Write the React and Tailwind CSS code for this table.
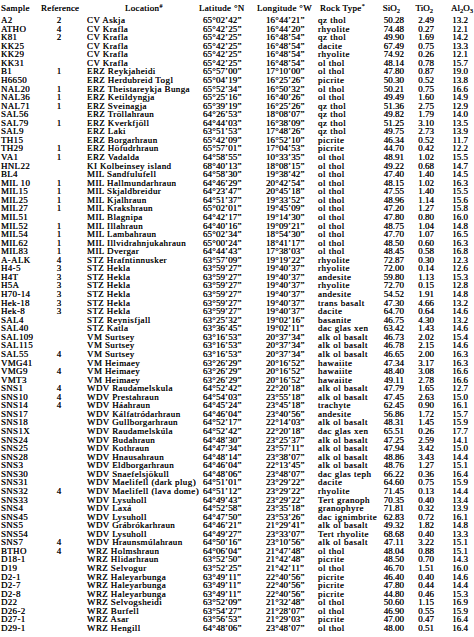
import React from "react";

const D = "\u00b0";
const q = (s) => s.replace(/'/g, "\u2019").replace(/"/g, "\u201d");

const rows = [
  ["A2", "2", "CV Askja", `65${D}02'42"`, `16${D}44'21"`, "qz thol", "50.28", "2.49", "13.2"],
  ["ATHO", "4", "CV Krafla", `65${D}42'25"`, `16${D}44'20"`, "rhyolite", "74.48", "0.27", "12.1"],
  ["K81", "2", "CV Krafla", `65${D}42'25"`, `16${D}48'54"`, "qz thol", "49.90", "1.69", "14.2"],
  ["KK25", "", "CV Krafla", `65${D}42'25"`, `16${D}48'54"`, "dacite", "67.49", "0.75", "13.3"],
  ["KK29", "", "CV Krafla", `65${D}42'25"`, `16${D}48'54"`, "rhyolite", "74.92", "0.26", "12.1"],
  ["KK31", "", "CV Krafla", `65${D}42'25"`, `16${D}48'54"`, "ol thol", "48.14", "0.78", "15.7"],
  ["B1", "1", "ERZ Reykjaheidi", `65${D}57'00"`, `17${D}10'00"`, "ol thol", "47.80", "0.87", "19.0"],
  ["H6650", "", "ERZ Herdubreid Togl", `65${D}04'19"`, `16${D}25'26"`, "picrite", "50.30", "0.52", "13.8"],
  ["NAL20", "1", "ERZ Theistareykja Bunga", `65${D}52'34"`, `16${D}50'32"`, "ol thol", "50.21", "0.75", "16.6"],
  ["NAL36", "1", "ERZ Ketildyngja", `65${D}25'16"`, `16${D}40'26"`, "ol thol", "49.49", "1.60", "14.9"],
  ["NAL71", "1", "ERZ Sveinagja", `65${D}39'19"`, `16${D}25'26"`, "qz thol", "51.36", "2.75", "12.9"],
  ["SAL56", "", "ERZ Tröllahraun", `64${D}26'53"`, `18${D}08'07"`, "qz thol", "49.82", "1.79", "14.0"],
  ["SAL79", "1", "ERZ Kverkfjöll", `64${D}44'03"`, `16${D}38'09"`, "qz thol", "51.25", "3.10", "13.5"],
  ["SAL9", "", "ERZ Laki", `63${D}51'53"`, `17${D}48'26"`, "qz thol", "49.75", "2.73", "13.9"],
  ["TH15", "", "ERZ Borgarhraun", `65${D}42'09"`, `16${D}52'10"`, "picrite", "46.34", "0.52", "11.7"],
  ["TH29", "1", "ERZ Höfudrhraun", `65${D}57'01"`, `17${D}04'53"`, "picrite", "44.70", "0.42", "12.2"],
  ["VA1", "1", "ERZ Vadalda", `64${D}58'55"`, `10${D}33'35"`, "ol thol", "48.91", "1.02", "15.5"],
  ["HNL22", "", "KI Kolbeinsey island", `68${D}40'13"`, `18${D}08'15"`, "ol thol", "49.22", "0.68", "14.7"],
  ["BL4", "", "MIL Sandfulufell", `64${D}58'30"`, `19${D}38'42"`, "ol thol", "47.40", "1.40", "14.5"],
  ["MIL 10", "1", "MIL Hallmundarhraun", `64${D}46'29"`, `20${D}42'54"`, "ol thol", "48.15", "1.02", "16.3"],
  ["MIL15", "1", "MIL Skjaldbreidur", `64${D}23'47"`, `20${D}45'18"`, "ol thol", "47.55", "1.40", "15.5"],
  ["MIL25", "1", "MIL Kjalhraun", `64${D}51'37"`, `19${D}33'52"`, "ol thol", "48.96", "1.14", "15.6"],
  ["MIL27", "1", "MIL Krakshraun", `65${D}02'01"`, `19${D}45'09"`, "ol thol", "47.20", "1.27", "15.8"],
  ["MIL51", "", "MIL Blagnipa", `64${D}42'17"`, `19${D}14'30"`, "ol thol", "47.80", "0.80", "16.0"],
  ["MIL52", "1", "MIL Illahraun", `64${D}40'16"`, `19${D}09'21"`, "ol thol", "48.75", "1.04", "14.8"],
  ["MIL54", "1", "MIL Lambahraun", `65${D}02'34"`, `18${D}54'30"`, "ol thol", "47.70", "1.07", "16.5"],
  ["MIL62", "1", "MIL Illvidrahnjukahraun", `65${D}00'24"`, `18${D}41'17"`, "ol thol", "48.50", "0.60", "16.3"],
  ["MIL83", "1", "MIL Dvergar", `64${D}44'43"`, `17${D}38'03"`, "ol thol", "48.45", "0.58", "16.8"],
  ["A-ALK", "4", "STZ Hrafntinnusker", `63${D}57'09"`, `19${D}19'22"`, "rhyolite", "72.87", "0.30", "12.3"],
  ["H4-5", "3", "STZ Hekla", `63${D}59'27"`, `19${D}40'37"`, "rhyolite", "72.00", "0.14", "12.6"],
  ["H4T", "3", "STZ Hekla", `63${D}59'27"`, `19${D}40'37"`, "andesite", "59.80", "1.13", "15.3"],
  ["H5A", "3", "STZ Hekla", `63${D}59'27"`, `19${D}40'37"`, "rhyolite", "72.70", "0.15", "12.8"],
  ["H70-14", "3", "STZ Hekla", `63${D}59'27"`, `19${D}40'37"`, "andesite", "54.52", "1.91", "14.8"],
  ["Hek-18", "3", "STZ Hekla", `63${D}59'27"`, `19${D}40'37"`, "trans basalt", "47.30", "4.66", "13.2"],
  ["Hek-8", "3", "STZ Hekla", `63${D}59'27"`, `19${D}40'37"`, "dacite", "64.70", "0.64", "14.6"],
  ["SAL4", "", "STZ Reynisfjall", `63${D}25'32"`, `19${D}02'16"`, "basanite", "46.75", "4.30", "13.2"],
  ["SAL40", "", "STZ Katla", `63${D}36'45"`, `19${D}02'11"`, "dac glas xen", "63.42", "1.43", "14.6"],
  ["SAL109", "", "VM Surtsey", `63${D}16'53"`, `20${D}37'34"`, "alk ol basalt", "46.73", "2.02", "15.4"],
  ["SAL115", "", "VM Surtsey", `63${D}16'53"`, `20${D}37'34"`, "alk ol basalt", "46.78", "2.15", "14.6"],
  ["SAL55", "4", "VM Surtsey", `63${D}16'53"`, `20${D}37'34"`, "alk ol basalt", "46.65", "2.00", "16.3"],
  ["VMG41", "", "VM Heimaey", `63${D}26'29"`, `20${D}16'52"`, "hawaiite", "47.34", "3.17", "16.3"],
  ["VMG9", "4", "VM Heimaey", `63${D}26'29"`, `20${D}16'52"`, "hawaiite", "48.40", "3.08", "16.6"],
  ["VMT3", "", "VM Heimaey", `63${D}26'29"`, `20${D}16'52"`, "hawaiite", "49.11", "2.78", "16.6"],
  ["SNS1", "4", "WDV Raudamelskula", `64${D}52'42"`, `22${D}20'18"`, "alk ol basalt", "47.79", "1.65", "12.7"],
  ["SNS10", "4", "WDV Prestahraun", `64${D}54'03"`, `23${D}55'18"`, "alk ol basalt", "47.45", "2.63", "15.0"],
  ["SNS14", "4", "WDV Háahraun", `64${D}45'24"`, `23${D}45'18"`, "trachyte", "62.45", "0.90", "16.1"],
  ["SNS17", "", "WDV Kálfatródarhraun", `64${D}46'04"`, `23${D}40'56"`, "andesite", "56.86", "1.72", "15.7"],
  ["SNS18", "", "WDV Gullborgarhraun", `64${D}52'17"`, `22${D}14'03"`, "alk ol basalt", "48.31", "1.45", "15.9"],
  ["SNS1X", "", "WDV Raudamelskúla", `64${D}52'42"`, `22${D}20'18"`, "dac glas xen", "65.51", "0.26", "17.7"],
  ["SNS24", "", "WDV Budahraun", `64${D}48'30"`, `23${D}25'37"`, "alk ol basalt", "47.25", "2.59", "14.1"],
  ["SNS25", "", "WDV Kothraun", `64${D}47'34"`, `23${D}57'11"`, "alk ol basalt", "47.94", "3.42", "15.0"],
  ["SNS28", "", "WDV Hnausahraun", `64${D}48'14"`, `23${D}38'07"`, "alk ol basalt", "48.86", "3.43", "14.4"],
  ["SNS3", "", "WDV Eldborgarhraun", `64${D}46'04"`, `22${D}13'45"`, "alk ol basalt", "48.76", "1.27", "15.1"],
  ["SNS30", "", "WDV Snaefelsjökull", `64${D}48'06"`, `23${D}48'07"`, "dac glas teph", "66.22", "0.36", "16.4"],
  ["SNS31", "", "WDV Maelifell (dark plug)", `64${D}51'01"`, `23${D}29'22"`, "dacite", "64.60", "0.75", "15.9"],
  ["SNS32", "4", "WDV Maelifell (lava dome)", `64${D}51'12"`, `23${D}29'22"`, "rhyolite", "71.45", "0.13", "14.4"],
  ["SNS33", "", "WDV Lysuholl", `64${D}49'43"`, `23${D}29'22"`, "Tert granoph", "70.35", "0.40", "13.4"],
  ["SNS4", "", "WDV Laxá", `64${D}52'58"`, `23${D}35'18"`, "granophyre", "71.81", "0.32", "13.9"],
  ["SNS45", "", "WDV Lysuholl", `64${D}47'50"`, `23${D}53'26"`, "dac ignimbrite", "62.83", "0.72", "16.1"],
  ["SNS5", "", "WDV Grábrókarhraun", `64${D}46'21"`, `21${D}29'41"`, "alk ol basalt", "49.32", "1.82", "14.8"],
  ["SNS54", "", "WDV Lysuholl", `64${D}49'27"`, `23${D}33'07"`, "Tert rhyolite", "68.68", "0.40", "13.3"],
  ["SNS7", "4", "WDV Hraunsmúlahraun", `64${D}50'16"`, `23${D}10'56"`, "alk ol basalt", "47.11", "3.22", "15.1"],
  ["BTHO", "4", "WRZ Holmshraun", `64${D}06'04"`, `21${D}47'48"`, "ol thol", "48.04", "0.88", "15.1"],
  ["D18-1", "", "WRZ Hlidarhraun", `63${D}52'50"`, `21${D}42'48"`, "picrite", "48.50", "0.70", "14.3"],
  ["D19", "", "WRZ Selvogur", `63${D}52'25"`, `21${D}42'11"`, "ol thol", "46.70", "1.51", "16.0"],
  ["D2-1", "", "WRZ Haleyarbunga", `63${D}49'11"`, `22${D}40'56"`, "picrite", "46.40", "0.40", "14.6"],
  ["D2-7", "", "WRZ Haleyarbunga", `63${D}49'11"`, `22${D}40'56"`, "picrite", "47.80", "0.44", "14.4"],
  ["D2-8", "", "WRZ Haleyarbunga", `63${D}49'11"`, `22${D}40'56"`, "picrite", "44.80", "0.46", "15.3"],
  ["D22", "", "WRZ Selvogsheidi", `63${D}52'09"`, `21${D}32'48"`, "ol thol", "50.60", "1.15", "16.9"],
  ["D26-2", "", "WRZ Burfell", `63${D}54'27"`, `21${D}28'07"`, "ol thol", "46.90", "0.55", "15.9"],
  ["D27-1", "", "WRZ Asar", `63${D}56'53"`, `21${D}29'03"`, "picrite", "47.00", "0.47", "16.4"],
  ["D29-1", "", "WRZ Hengill", `64${D}48'06"`, `23${D}48'07"`, "ol thol", "48.00", "0.51", "16.4"],
];

const grid =
  "grid grid-cols-[40px_36px_122px_58px_57px_57px_33px_30px_39px] items-center";

export default function App() {
  return (
    <div
      className="w-[474px] h-[637px] bg-white text-[#141414] overflow-hidden pl-[1px]"
      style={{ fontFamily: '"Liberation Serif", "Times New Roman", serif' }}
    >
      <div className="text-[9px] [text-shadow:0_0_0.5px_#000]">
        <div className={`${grid} h-[16px] leading-[16px] whitespace-nowrap`}>
          <div className="tracking-[0.3px]">Sample</div>
          <div className="text-center tracking-[0.2px]">Reference</div>
          <div className="pl-[48px] tracking-[0.3px]">
            Location<sup className="text-[6px]">#</sup>
          </div>
          <div className="tracking-[0.3px]">Latitude {D}N</div>
          <div className="tracking-[0.3px]">Longitude {D}W</div>
          <div className="pl-[6px] tracking-[0.3px]">
            Rock Type<sup className="text-[6px]">*</sup>
          </div>
          <div className="text-right pr-[4px]">
            SiO<sub className="text-[6.5px]">2</sub>
          </div>
          <div className="text-right pr-[1px]">
            TiO<sub className="text-[6.5px]">2</sub>
          </div>
          <div className="text-right">
            Al<sub className="text-[6.5px]">2</sub>O<sub className="text-[6.5px]">3</sub>
          </div>
        </div>
        {rows.map((r, i) => (
          <div
            key={i}
            className={`${grid} h-[8.57px] leading-[8.57px] whitespace-nowrap`}
          >
            <div className="tracking-[0.3px]">{r[0]}</div>
            <div className="text-center">{r[1]}</div>
            <div className="pl-[10px] tracking-[0.4px]">{r[2]}</div>
            <div className="pl-[4px] tracking-[0.1px]">{q(r[3])}</div>
            <div className="pl-[9px] tracking-[0.1px]">{q(r[4])}</div>
            <div className="pl-[4px] tracking-[0.5px]">{r[5]}</div>
            <div className="text-right">{r[6]}</div>
            <div className="text-right">{r[7]}</div>
            <div className="text-right pr-[5px]">{r[8]}</div>
          </div>
        ))}
      </div>
    </div>
  );
}
